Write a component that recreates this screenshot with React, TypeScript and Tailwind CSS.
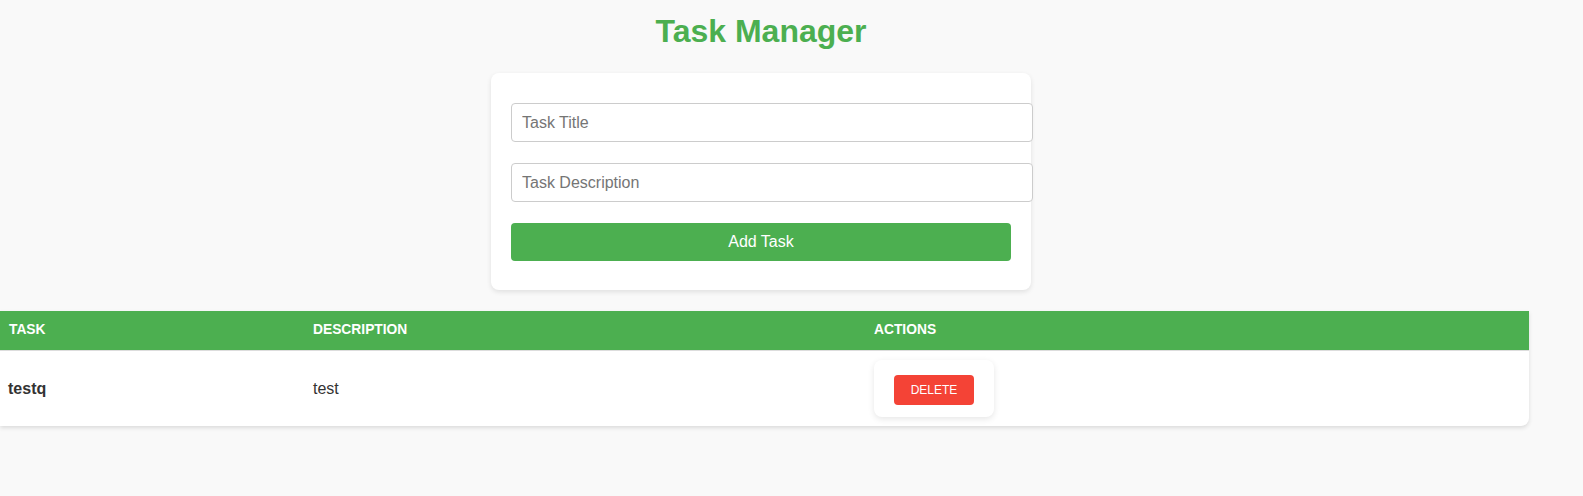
import React from 'react';

const tasks = [{ title: 'testq', description: 'test' }];

const App: React.FC = () => {
  return (
    <div className="min-h-screen bg-[#f9f9f9] font-['Liberation_Sans',Arial,sans-serif] text-[#333]">
      <div className="w-[1522px]">
        <h1 className="pt-[13px] text-center text-[32px] font-bold leading-[37px] text-[#4caf50]">
          Task Manager
        </h1>

        {/* Add task form */}
        <div className="mx-auto mt-[23px] w-[540px] rounded-lg bg-white px-5 pt-[30px] pb-[29px] shadow-[0_2px_5px_rgba(0,0,0,0.1)]">
          <input
            type="text"
            placeholder="Task Title"
            className="box-content block h-[19px] w-[500px] rounded border border-[#ccc] bg-white px-[10px] py-[9px] text-base text-[#333] placeholder:text-[#757575] outline-none"
          />
          <input
            type="text"
            placeholder="Task Description"
            className="box-content mt-[21px] block h-[19px] w-[500px] rounded border border-[#ccc] bg-white px-[10px] py-[9px] text-base text-[#333] placeholder:text-[#757575] outline-none"
          />
          <button className="mt-[21px] block h-[38px] w-[500px] rounded bg-[#4caf50] text-base text-white">
            Add Task
          </button>
        </div>
      </div>

      {/* Task list */}
      <div className="mt-[21px] w-[1529px] overflow-hidden rounded-br-lg bg-white shadow-[0_2px_4px_rgba(0,0,0,0.12)]">
        <div className="grid h-[40px] grid-cols-[304px_561px_1fr] items-center border-b border-[#ddd] bg-[#4caf50] text-[13.8px] font-bold uppercase text-white">
          <div className="pl-[9px]">Task</div>
          <div className="pl-[9px]">Description</div>
          <div className="pl-[9px]">Actions</div>
        </div>
        {tasks.map((task, index) => (
          <div key={index} className="grid h-[75px] grid-cols-[304px_561px_1fr] items-center text-base">
            <div className="pl-[8px] font-bold">{task.title}</div>
            <div className="pl-[9px]">{task.description}</div>
            <div className="pl-[9px]">
              <div className="w-[120px] rounded-lg bg-white px-5 pt-[15px] pb-[12px] shadow-[0_2px_6px_rgba(0,0,0,0.1)]">
                <button className="h-[30px] w-[80px] rounded bg-[#f44336] text-[12px] font-medium text-white">
                  DELETE
                </button>
              </div>
            </div>
          </div>
        ))}
      </div>
    </div>
  );
};

export default App;
